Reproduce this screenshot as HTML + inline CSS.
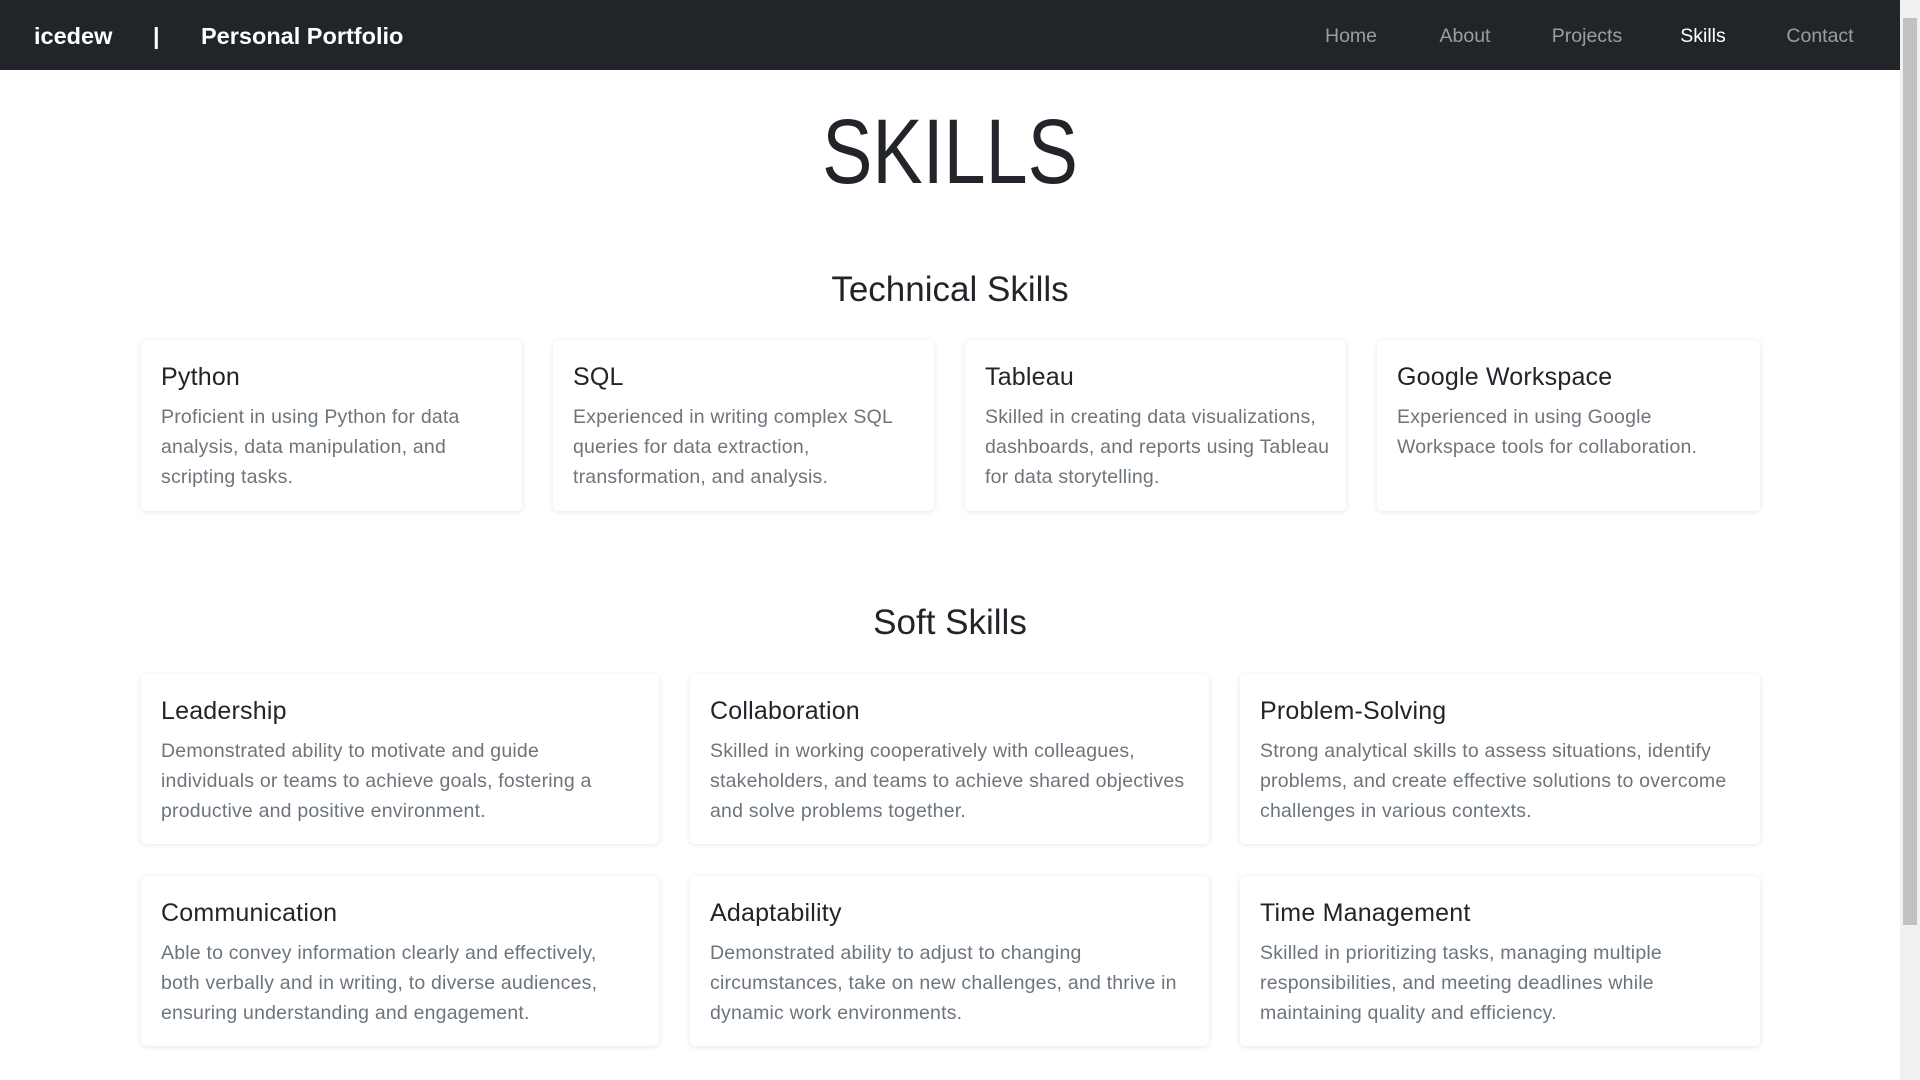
<!DOCTYPE html>
<html><head><meta charset="utf-8"><style>
*{margin:0;padding:0;box-sizing:border-box}
body{width:1920px;height:1080px;overflow:hidden;background:#fff;font-family:"Liberation Sans",sans-serif;position:relative}
.nav{position:absolute;left:0;top:0;width:1900px;height:70px;background:#212529}
.nav span{position:absolute;top:0;line-height:72px;color:#fff}
.brand{font-size:23.5px;font-weight:bold}
.nl{font-size:19.5px;color:rgba(255,255,255,.55)!important;transform:translateX(-50%)}
.nl.a{color:#fff!important}
h1{position:absolute;left:0;width:1900px;top:100px;text-align:center;font-weight:300;font-size:92px;color:#212529;transform:scaleX(0.82)}
h2{position:absolute;left:0;width:1900px;text-align:center;font-weight:normal;font-size:35px;color:#212529}
.card{position:absolute;background:#fff;border-radius:5px;box-shadow:0 1px 6px rgba(0,0,0,.1);padding:20px 20px 20px 20px}
.card h3{font-weight:normal;font-size:25px;color:#212529;margin-top:2px;line-height:30px;letter-spacing:0.2px}
.card p{font-size:19.5px;line-height:30px;color:#6c757d;margin-top:10px;letter-spacing:0.2px}
.sb{position:absolute;right:0;top:0;width:20px;height:1080px;background:#f1f1f1}
.th{position:absolute;right:3px;top:18px;width:14px;height:907px;background:#c1c1c1}
</style></head><body>
<div class="nav">
<span class="brand" style="left:34px">icedew</span>
<span class="brand" style="left:153px">|</span>
<span class="brand" style="left:201px">Personal Portfolio</span>
<span class="nl" style="left:1351px">Home</span>
<span class="nl" style="left:1465px">About</span>
<span class="nl" style="left:1587px">Projects</span>
<span class="nl a" style="left:1703px">Skills</span>
<span class="nl" style="left:1820px">Contact</span>
</div>
<h1>SKILLS</h1>
<h2 style="top:270px">Technical Skills</h2>
<div class="card" style="left:141px;top:340px;width:381px;height:171px"><h3>Python</h3><p>Proficient in using Python for data<br>analysis, data manipulation, and<br>scripting tasks.</p></div>
<div class="card" style="left:553px;top:340px;width:381px;height:171px"><h3>SQL</h3><p>Experienced in writing complex SQL<br>queries for data extraction,<br>transformation, and analysis.</p></div>
<div class="card" style="left:965px;top:340px;width:381px;height:171px"><h3>Tableau</h3><p style="white-space:nowrap">Skilled in creating data visualizations,<br>dashboards, and reports using Tableau<br>for data storytelling.</p></div>
<div class="card" style="left:1377px;top:340px;width:383px;height:171px"><h3>Google Workspace</h3><p>Experienced in using Google<br>Workspace tools for collaboration.</p></div>
<h2 style="top:603px">Soft Skills</h2>
<div class="card" style="left:141px;top:674px;width:518px;height:170px"><h3>Leadership</h3><p>Demonstrated ability to motivate and guide<br>individuals or teams to achieve goals, fostering a<br>productive and positive environment.</p></div>
<div class="card" style="left:690px;top:674px;width:519px;height:170px"><h3>Collaboration</h3><p style="white-space:nowrap">Skilled in working cooperatively with colleagues,<br>stakeholders, and teams to achieve shared objectives<br>and solve problems together.</p></div>
<div class="card" style="left:1240px;top:674px;width:520px;height:170px"><h3>Problem-Solving</h3><p>Strong analytical skills to assess situations, identify<br>problems, and create effective solutions to overcome<br>challenges in various contexts.</p></div>
<div class="card" style="left:141px;top:876px;width:518px;height:170px"><h3>Communication</h3><p>Able to convey information clearly and effectively,<br>both verbally and in writing, to diverse audiences,<br>ensuring understanding and engagement.</p></div>
<div class="card" style="left:690px;top:876px;width:519px;height:170px"><h3>Adaptability</h3><p>Demonstrated ability to adjust to changing<br>circumstances, take on new challenges, and thrive in<br>dynamic work environments.</p></div>
<div class="card" style="left:1240px;top:876px;width:520px;height:170px"><h3>Time Management</h3><p>Skilled in prioritizing tasks, managing multiple<br>responsibilities, and meeting deadlines while<br>maintaining quality and efficiency.</p></div>
<div class="sb"><div class="th"></div></div>
</body></html>
